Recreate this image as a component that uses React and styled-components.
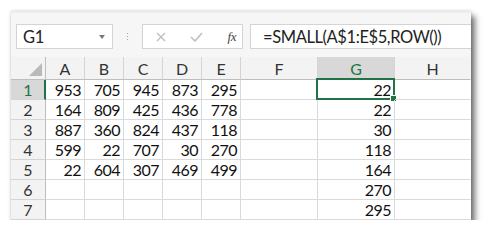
import React from "react";
import styled, { createGlobalStyle } from "styled-components";

const GlobalStyle = createGlobalStyle`
  html, body { margin: 0; background: #ffffff; }
  body { padding: 11px 0 0 11px; font-family: Lato, "Open Sans", sans-serif; }
`;

const GREEN = "#217346";
const FONT = `Lato, "Open Sans", sans-serif`;

const Window = styled.div`
  width: 460px;
  background: #ffffff;
  box-shadow: 4px 5px 6px rgba(0, 0, 0, 0.55), 0 0 3px rgba(0, 0, 0, 0.18);
`;

const FormulaBar = styled.div`
  height: 46px;
  box-sizing: border-box;
  padding: 13px 0 0 5px;
  background: linear-gradient(#e9e9e9 0, #f6f6f6 3px, #f6f6f6 100%);
  display: flex;
  align-items: flex-start;
`;

const Box = styled.div`
  box-sizing: border-box;
  height: 25px;
  background: #ffffff;
  border: 1px solid #d4d4d4;
  display: flex;
  align-items: center;
  font-family: ${FONT};
  color: #222;
  line-height: 20px;
`;

const NameBox = styled(Box)`
  width: 97px;
  padding: 0 7px 0 6px;
  justify-content: space-between;
  font-size: 16.5px;
  letter-spacing: -0.3px;
`;

const DropArrow = styled.span`
  width: 0;
  height: 0;
  border-left: 3.5px solid transparent;
  border-right: 3.5px solid transparent;
  border-top: 4px solid #777;
  margin-top: 1px;
`;

const Grip = styled.div`
  width: 29px;
  height: 25px;
  display: flex;
  flex-direction: column;
  align-items: center;
  justify-content: center;
  gap: 2px;
`;

const GripDot = styled.span`
  width: 1px;
  height: 1px;
  background: #a8a8a8;
`;

const ActionBox = styled(Box)`
  width: 101px;
  padding: 0 6px 0 13px;
  justify-content: space-between;
`;

const FxLabel = styled.span`
  font-family: "Liberation Serif", "DejaVu Serif", serif;
  font-style: italic;
  font-size: 13px;
  color: #444;
  letter-spacing: -0.5px;
`;

const FormulaInput = styled(Box)`
  width: 221px;
  margin-left: 7px;
  border-right: none;
  padding-left: 12px;
  font-size: 16.5px;
  letter-spacing: -0.4px;
  white-space: nowrap;
`;

const Sheet = styled.div`
  display: grid;
  grid-template-columns: 35px repeat(5, 39px) 77px 77px 76px;
  grid-template-rows: 23px repeat(7, 20px);
  font-family: ${FONT};
  font-size: 16px;
  line-height: 19px;
`;

const Corner = styled.div`
  position: relative;
  background: #f3f3f3;
  border-right: 1px solid #bdbdbd;
  border-bottom: 1px solid #bdbdbd;
  box-sizing: border-box;
`;

const CornerTriangle = styled.svg`
  position: absolute;
  right: 3px;
  bottom: 3px;
`;

const ColHeader = styled.div`
  box-sizing: border-box;
  background: ${(p) => (p.$active ? "#d8d8d8" : "#f3f3f3")};
  border-right: 1px solid ${(p) => (p.$last ? "transparent" : "#d4d4d4")};
  border-bottom: ${(p) => (p.$active ? `2px solid ${GREEN}` : "1px solid #bdbdbd")};
  color: ${(p) => (p.$active ? GREEN : "#333")};
  display: flex;
  align-items: center;
  justify-content: center;
  padding-top: ${(p) => (p.$active ? "1px" : "0")};
`;

const RowHeader = styled.div`
  box-sizing: border-box;
  background: ${(p) => (p.$active ? "#d8d8d8" : "#f3f3f3")};
  border-right: ${(p) => (p.$active ? `2px solid ${GREEN}` : "1px solid #bdbdbd")};
  border-bottom: 1px solid #d4d4d4;
  color: ${(p) => (p.$active ? GREEN : "#333")};
  display: flex;
  align-items: center;
  justify-content: center;
  padding-left: ${(p) => (p.$active ? "1px" : "0")};
`;

const Cell = styled.div`
  position: relative;
  box-sizing: border-box;
  border-right: 1px solid ${(p) => (p.$last ? "transparent" : "#dadada")};
  border-bottom: 1px solid #dadada;
  padding: 0 3px 0 0;
  text-align: right;
  color: #111;
  letter-spacing: -0.5px;
  white-space: nowrap;
`;

const Selection = styled.div`
  position: absolute;
  left: -2px;
  top: -2px;
  right: -1px;
  bottom: -1px;
  border: 2px solid ${GREEN};
  pointer-events: none;
`;

const FillHandle = styled.div`
  position: absolute;
  right: -4px;
  bottom: -4px;
  width: 5px;
  height: 5px;
  background: ${GREEN};
  border: 1px solid #ffffff;
`;

const columns = ["A", "B", "C", "D", "E", "F", "G", "H"];
const data = [
  [953, 705, 945, 873, 295],
  [164, 809, 425, 436, 778],
  [887, 360, 824, 437, 118],
  [599, 22, 707, 30, 270],
  [22, 604, 307, 469, 499],
];
const gValues = [22, 22, 30, 118, 164, 270, 295];

export default function App() {
  return (
    <>
      <GlobalStyle />
      <Window>
        <FormulaBar>
          <NameBox>
            <span>G1</span>
            <DropArrow />
          </NameBox>
          <Grip>
            <GripDot />
            <GripDot />
            <GripDot />
          </Grip>
          <ActionBox>
            <svg width="10" height="10" viewBox="0 0 10 10">
              <path d="M1 1 L9 9 M9 1 L1 9" stroke="#bdbdbd" strokeWidth="1.3" fill="none" />
            </svg>
            <svg width="13" height="10" viewBox="0 0 13 10">
              <path d="M1 5 L5 9 L12 1" stroke="#bdbdbd" strokeWidth="1.5" fill="none" />
            </svg>
            <FxLabel>fx</FxLabel>
          </ActionBox>
          <FormulaInput>=SMALL(A$1:E$5,ROW())</FormulaInput>
        </FormulaBar>
        <Sheet>
          <Corner>
            <CornerTriangle width="13" height="13" viewBox="0 0 13 13">
              <path d="M13 0 L13 13 L0 13 Z" fill="#b9b9b9" />
            </CornerTriangle>
          </Corner>
          {columns.map((c, i) => (
            <ColHeader key={c} $active={c === "G"} $last={i === columns.length - 1}>
              {c}
            </ColHeader>
          ))}
          {gValues.map((g, r) => (
            <React.Fragment key={r}>
              <RowHeader $active={r === 0}>{r + 1}</RowHeader>
              {columns.map((c, ci) => {
                let v = "";
                if (ci < 5 && data[r]) v = data[r][ci];
                if (c === "G") v = g;
                return (
                  <Cell key={c} $last={ci === columns.length - 1}>
                    {v}
                    {r === 0 && c === "G" && (
                      <Selection>
                        <FillHandle />
                      </Selection>
                    )}
                  </Cell>
                );
              })}
            </React.Fragment>
          ))}
        </Sheet>
      </Window>
    </>
  );
}
